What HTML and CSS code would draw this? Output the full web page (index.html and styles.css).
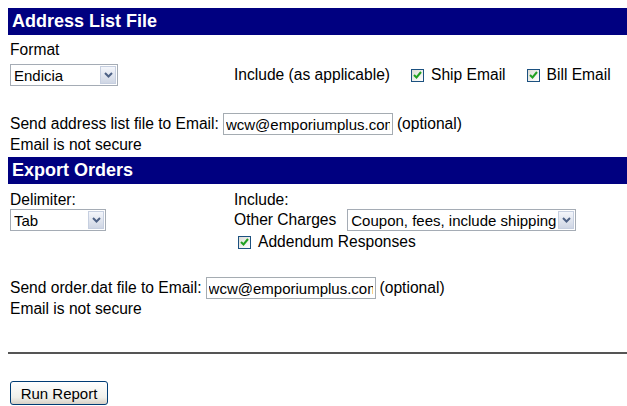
FILE: index.html
```html
<!DOCTYPE html>
<html lang="en">
<head>
    <title>Reports</title>
    <link rel="stylesheet" href="styles.css">
</head>
<body>
    <div class="page">
        <!-- Address list section -->
        <h2 class="bar">Address List File</h2>
        <div class="label">Format</div>
        <div class="row">
            <div class="left">
                <span class="selectbox w-endicia">
                    <select name="format">
                        <option>Endicia</option>
                    </select>
                    <span class="arrow"><svg width="9" height="6" viewBox="0 0 9 6"><path d="M1 1 L4.5 4.5 L8 1" fill="none" stroke="#4d6185" stroke-width="2"/></svg></span>
                </span>
            </div>
            <div class="include">
                <span>Include (as applicable)</span>
                <label class="check"><span class="box"><svg width="9" height="8" viewBox="0 0 9 8"><path d="M1 4 L3.5 6.5 L8 1" fill="none" stroke="#21a121" stroke-width="2"/></svg></span>Ship Email</label>
                <label class="check"><span class="box"><svg width="9" height="8" viewBox="0 0 9 8"><path d="M1 4 L3.5 6.5 L8 1" fill="none" stroke="#21a121" stroke-width="2"/></svg></span>Bill Email</label>
            </div>
        </div>

        <div class="email-row first">
            Send address list file to Email:
            <input type="text" class="email" value="wcw@emporiumplus.com" />
            (optional)
        </div>
        <div class="note">Email is not secure</div>

        <!-- Export section -->
        <h2 class="bar">Export Orders</h2>
        <div class="export">
            <div class="left">
                <div class="label small">Delimiter:</div>
                <span class="selectbox w-tab">
                    <select name="delimiter">
                        <option>Tab</option>
                    </select>
                    <span class="arrow"><svg width="9" height="6" viewBox="0 0 9 6"><path d="M1 1 L4.5 4.5 L8 1" fill="none" stroke="#4d6185" stroke-width="2"/></svg></span>
                </span>
            </div>
            <div class="right">
                <div class="label small">Include:</div>
                <div class="charges">
                    <span>Other Charges</span>
                    <span class="selectbox w-charges">
                        <select name="charges">
                            <option>Coupon, fees, include shipping</option>
                        </select>
                        <span class="arrow"><svg width="9" height="6" viewBox="0 0 9 6"><path d="M1 1 L4.5 4.5 L8 1" fill="none" stroke="#4d6185" stroke-width="2"/></svg></span>
                    </span>
                </div>
                <label class="check addendum"><span class="box"><svg width="9" height="8" viewBox="0 0 9 8"><path d="M1 4 L3.5 6.5 L8 1" fill="none" stroke="#21a121" stroke-width="2"/></svg></span>Addendum Responses</label>
            </div>
        </div>

        <div class="email-row second">
            Send order.dat file to Email:
            <input type="text" class="email" value="wcw@emporiumplus.com" />
            (optional)
        </div>
        <div class="note">Email is not secure</div>

        <hr>

        <button type="button">Run Report</button>
    </div>
</body>
</html>
```

FILE: styles.css
```css
body {
    margin: 8px 0 0 8px;
    font-family: "Liberation Sans", Arial, sans-serif;
    font-size: 15.6px;
    color: #000;
    background: #fff;
    overflow: hidden;
}

.page {
    width: 640px;
}

.bar {
    margin: 0;
    height: 27px;
    line-height: 27px;
    padding-left: 4px;
    background-color: #000080;
    color: #fff;
    font-size: 18px;
    font-weight: bold;
}

.label {
    height: 18px;
    line-height: 18px;
    margin: 6px 0 0 2px;
}

.label.small {
    margin-top: 7px;
}

.row {
    display: flex;
    align-items: center;
    margin-top: 5px;
}

.left {
    width: 226px;
    padding-left: 2px;
    box-sizing: border-box;
}

.include {
    display: flex;
    align-items: center;
}

.include .check {
    margin-left: 21px;
}

.selectbox {
    position: relative;
    display: inline-block;
    height: 22px;
    border: 1px solid #a5acb5;
    box-sizing: border-box;
    background: #fff;
    vertical-align: middle;
}

.selectbox select {
    appearance: none;
    -webkit-appearance: none;
    border: none;
    outline: none;
    background: transparent;
    font-family: "Liberation Sans", Arial, sans-serif;
    font-size: 15px;
    height: 20px;
    padding: 0 0 0 3px;
    width: 100%;
    color: #000;
}

.selectbox .arrow {
    position: absolute;
    top: 1px;
    right: 1px;
    width: 16px;
    height: 18px;
    box-sizing: border-box;
    border: 1px solid #c6cfe0;
    background: linear-gradient(#f4f6fb, #cfd6e4);
    display: flex;
    align-items: center;
    justify-content: center;
}

.w-endicia {
    width: 108px;
}

.w-tab {
    width: 96px;
}

.w-charges {
    width: 229px;
}

.check {
    display: inline-flex;
    align-items: center;
}

.box {
    width: 13px;
    height: 13px;
    box-sizing: border-box;
    border: 1px solid #1c5180;
    background: linear-gradient(135deg, #dcdcd5, #fff);
    margin-right: 7px;
    display: inline-flex;
    align-items: center;
    justify-content: center;
}

.email-row {
    display: flex;
    align-items: center;
    height: 22px;
    padding-left: 2px;
}

.email-row.first {
    margin-top: 27px;
}

.email-row.second {
    margin-top: 25px;
}

.email {
    width: 170px;
    height: 22px;
    box-sizing: border-box;
    border: 1px solid #a5acb2;
    font-family: "Liberation Sans", Arial, sans-serif;
    font-size: 15px;
    padding: 0 2px;
    margin: 0 4px;
}

.note {
    height: 20px;
    line-height: 20px;
    padding-left: 2px;
    margin-bottom: 2px;
}

.export {
    display: flex;
}

.export .left .label {
    margin-left: 0;
}

.right .label {
    margin-left: 0;
}

.charges {
    display: flex;
    align-items: center;
    gap: 11px;
    height: 22px;
}

.addendum {
    margin: 1px 0 0 4px;
    height: 20px;
}

hr {
    margin: 33px 0 0 0;
    border: none;
    border-top: 2px solid #555;
    height: 0;
}

button {
    margin: 27px 0 0 2px;
    width: 98px;
    height: 24px;
    font-family: "Liberation Sans", Arial, sans-serif;
    font-size: 15px;
    color: #000;
    border: 1px solid #003c74;
    border-radius: 3px;
    background: linear-gradient(#ffffff, #f0f0ea 70%, #d6d0c5);
    padding: 0;
}
```
